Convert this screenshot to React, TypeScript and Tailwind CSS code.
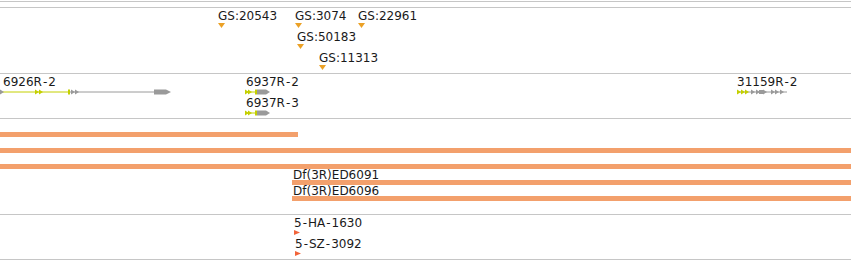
import React from "react";

const font = { fontFamily: '"DejaVu Sans", Verdana, sans-serif' };
const W = 851;

function Txt({ text }: { text: string }) {
  const parts = text.split("-");
  return (
    <>
      {parts.map((p, i) => (
        <React.Fragment key={i}>
          {i > 0 && <span className="mx-[1px]">-</span>}
          {p}
        </React.Fragment>
      ))}
    </>
  );
}

function DownTri() {
  return (
    <svg width="7" height="5" viewBox="0 0 7 5" className="block shrink-0">
      <polygon points="0,0 7,0 3.5,5" fill="#eba126" />
    </svg>
  );
}

function RightTri() {
  return (
    <svg width="6" height="5" viewBox="0 0 6 5" className="block shrink-0">
      <polygon points="0,0 6,2.5 0,5" fill="#f2643a" />
    </svg>
  );
}

const Y = "#c4d000";
const G = "#9a9a9a";

function Chevron({ x, c, y = 3 }: { x: number; c: string; y?: number }) {
  return <polygon points={`${x},${y - 2.5} ${x + 4},${y} ${x},${y + 2.5}`} fill={c} />;
}

function LongGene() {
  return (
    <svg className="block" width="175" height="6" viewBox="0 0 175 6">
      <line x1="0" y1="3" x2="70" y2="3" stroke={Y} strokeWidth="1" />
      <line x1="70" y1="3" x2="155" y2="3" stroke={G} strokeWidth="1" />
      <Chevron x={0} c={G} />
      <Chevron x={35} c={Y} />
      <Chevron x={39} c={Y} />
      <rect x="68" y="0.5" width="2" height="5" fill={Y} />
      <Chevron x={71} c={G} />
      <Chevron x={75} c={G} />
      <polygon points="154,0.5 166,0.5 171,3 166,5.5 154,5.5" fill={G} />
    </svg>
  );
}

function ShortGene() {
  return (
    <svg className="block" width="28" height="6" viewBox="0 0 28 6">
      <line x1="0" y1="3" x2="12" y2="3" stroke={Y} strokeWidth="1" />
      <Chevron x={0} c={Y} />
      <Chevron x={3} c={Y} />
      <rect x="10" y="0.5" width="2" height="5" fill={Y} />
      <polygon points="12,0.5 21,0.5 25,3 21,5.5 12,5.5" fill={G} />
    </svg>
  );
}

function MultiGene() {
  return (
    <svg className="block" width="52" height="6" viewBox="0 0 52 6">
      <line x1="0" y1="3" x2="50" y2="3" stroke={G} strokeWidth="1" />
      <Chevron x={0} c={Y} />
      <Chevron x={4} c={Y} />
      <Chevron x={8} c={Y} />
      <Chevron x={14} c={G} />
      <Chevron x={19} c={G} />
      <rect x="22" y="1" width="4" height="4" fill={G} />
      <Chevron x={26} c={G} />
      <Chevron x={34} c={G} />
      <Chevron x={38} c={G} />
      <Chevron x={43} c={G} />
    </svg>
  );
}

type Feat = { x: number; label: string; glyph: React.ReactNode; lx?: number };

/* A feature sits on the genome canvas at its coordinate: label above its glyph */
function FeatureRow({ feats }: { feats: Feat[] }) {
  return (
    <div className="relative h-[21px] shrink-0">
      {feats.map((f, i) => (
        <div key={i} className="absolute top-0 flex flex-col items-start" style={{ left: f.x }}>
          <div
            className="whitespace-nowrap text-[12px] leading-[14px] text-[#1a1a1a]"
            style={{ marginLeft: f.lx ?? 0 }}
          >
            <Txt text={f.label} />
          </div>
          {f.glyph}
        </div>
      ))}
    </div>
  );
}

const gsRows: Feat[][] = [
  [
    { x: 218, label: "GS:20543", glyph: <DownTri /> },
    { x: 295, label: "GS:3074", glyph: <DownTri /> },
    { x: 358, label: "GS:22961", glyph: <DownTri /> },
  ],
  [{ x: 297, label: "GS:50183", glyph: <DownTri /> }],
  [{ x: 319, label: "GS:11313", glyph: <DownTri /> }],
];

const geneRows: Feat[][] = [
  [
    { x: 0, lx: 3, label: "6926R-2", glyph: <LongGene /> },
    { x: 245, lx: 1, label: "6937R-2", glyph: <ShortGene /> },
    { x: 737, lx: 0, label: "31159R-2", glyph: <MultiGene /> },
  ],
  [{ x: 245, lx: 1, label: "6937R-3", glyph: <ShortGene /> }],
];

const strainRows: Feat[][] = [
  [{ x: 294, label: "5-HA-1630", glyph: <RightTri /> }],
  [{ x: 295, label: "5-SZ-3092", glyph: <RightTri /> }],
];

type Span = { start: number; end: number; label?: string };
const deficiencies: Span[] = [
  { start: 0, end: 298 },
  { start: 0, end: W },
  { start: 0, end: W },
  { start: 292, end: W, label: "Df(3R)ED6091" },
  { start: 292, end: W, label: "Df(3R)ED6096" },
];

function Track({ h, children, last }: { h: string; children: React.ReactNode; last?: boolean }) {
  return (
    <div
      className={`flex flex-col border-t border-[#c6c6c6] ${h} ${last ? "border-b" : ""}`}
    >
      {children}
    </div>
  );
}

export default function App() {
  return (
    <div className="flex w-[851px] h-[260px] flex-col overflow-hidden bg-white pt-[1px]" style={font}>
      <div className="h-[6px] border-t border-[#c6c6c6]" />
      <Track h="h-[66px] pt-[1px]">
        {gsRows.map((r, i) => (
          <FeatureRow key={i} feats={r} />
        ))}
      </Track>
      <Track h="h-[45px] pt-[1px]">
        {geneRows.map((r, i) => (
          <FeatureRow key={i} feats={r} />
        ))}
      </Track>
      <Track h="h-[96px] pt-[13px] gap-[11px]">
        {deficiencies.map((d, i) => (
          <div key={i} className="flex flex-col">
            {d.label && (
              <div
                className="-mb-[1px] whitespace-nowrap pl-[1px] text-[12px] leading-[12px] text-[#1a1a1a]"
                style={{ marginLeft: d.start, marginTop: -11 }}
              >
                {d.label}
              </div>
            )}
            <div className="h-[5px] bg-[#f3a06c]" style={{ marginLeft: d.start, width: d.end - d.start }} />
          </div>
        ))}
      </Track>
      <Track h="h-[46px] pt-[1px]" last>
        {strainRows.map((r, i) => (
          <FeatureRow key={i} feats={r} />
        ))}
      </Track>
    </div>
  );
}
